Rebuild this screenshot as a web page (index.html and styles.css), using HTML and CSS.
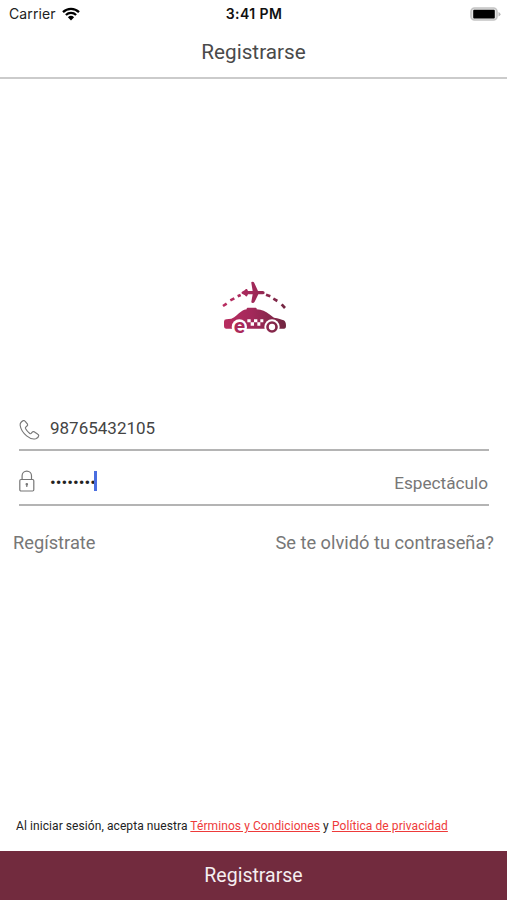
FILE: index.html
```html
<!DOCTYPE html>
<html lang="es">
<head>
    <meta charset="UTF-8">
    <meta name="viewport" content="width=device-width, initial-scale=1.0">
    <title>Registrarse</title>
    <link rel="stylesheet" href="styles.css">
</head>
<body>
    <div class="screen">
        <div class="status-bar">
            <div class="carrier">
                <span>Carrier</span>
                <svg class="wifi" viewBox="0 0 18 14">
                    <path d="M1 5.1a11.5 11.5 0 0 1 16 0M3.9 8a7.4 7.4 0 0 1 10.2 0" fill="none" stroke="#000" stroke-width="2.3"/>
                    <path d="M5.9 10.2a4.5 4.5 0 0 1 6.2 0L9 13.6z"/>
                </svg>
            </div>
            <div class="time">3:41 PM</div>
            <div class="battery">
                <svg viewBox="0 0 31 14">
                    <rect x="1" y="1" width="26" height="12" rx="3.5" fill="#e4e4e4" stroke="#c4c4c4" stroke-width="1.6"/>
                    <rect x="3.2" y="2.7" width="21.6" height="8.8" rx="1"/>
                    <path d="M28.5 5v4.5q2-.8 2-2.25t-2-2.25z" fill="#b8b8b8"/>
                </svg>
            </div>
        </div>
        <h1 class="title">Registrarse</h1>

        <div class="logo">
            <svg viewBox="0 0 270 225">
                <defs>
                    <linearGradient id="wine" gradientUnits="userSpaceOnUse" x1="40" y1="0" x2="230" y2="0">
                        <stop offset="0" stop-color="#b92d60"/>
                        <stop offset="0.45" stop-color="#a3295a"/>
                        <stop offset="1" stop-color="#702640"/>
                    </linearGradient>
                </defs>
                <!-- flight path -->
                <path d="M39 108l11-7M61 91l12-6M83 79l9-4M168 74l13 5M190 86l12 7M215 103l10 11" fill="none" stroke="url(#wine)" stroke-width="8"/>
                <!-- plane -->
                <path d="M164 68q0-5-6-5h-14l-11-24q-1-4-6-4-4 0-3 4l4 24h-14l-3-6q-5-1-6 3l-9 5q-3 3 0 6l9 5q1 4 6 3l3-6h14l-4 22q0 4 4 4t6-4l11-22h13q6 0 6-5z" fill="url(#wine)"/>
                <!-- car -->
                <path d="M42 155q0-7 7-7l15-2q9-3 16-10 14-14 23-17l7-1v-2q0-3 3-3h24q3 0 3 3v2q23 2 37 14l15 11q20 3 29 8 7 4 7 16 0 9-6 9H48q-6 0-6-7z" fill="url(#wine)"/>
                <circle cx="88" cy="171" r="23" fill="#fff"/>
                <circle cx="186" cy="171" r="23" fill="#fff"/>
                <circle cx="186" cy="171" r="13.5" fill="none" stroke="url(#wine)" stroke-width="8"/>
                <text x="88" y="188" class="logo-letter">e</text>
                <path d="M112 148h10v9h-10zM132 148h10v9h-10zM151 148h9v9h-9zM122 157h10v10h-10zM142 157h9v10h-9z" fill="#fff"/>
            </svg>
        </div>

        <div class="form">
            <div class="field">
                <svg class="phone-icon" viewBox="0 0 22 22">
                    <path d="M4.5 1.2Q1 2.8 1.2 6 2 12 8 17.2q5 4.2 9.600 3 2.8-1 3.1-3.3 0-1-1-1.5l-3.8-2.500q-1.2-.7-2 .3l-1.1 1.4q-.7.6-1.5 0-3-2.300-4.500-5.200-.4-1 .4-1.600L8.600 6.600q.9-.7.3-1.700L6.300 1.700q-.7-1-1.800-.5z"/>
                </svg>
                <span class="phone">98765432105</span>
            </div>
            <div class="field password-field">
                <svg class="lock-icon" viewBox="0 0 16 22">
                    <rect x=".8" y="9.5" width="14" height="11.5" rx="1.2"/>
                    <path d="M3.1 9.5V5.800a4.700 4.700 0 0 1 9.400 0v3.700"/>
                    <circle cx="7.8" cy="14.2" r=".7"/>
                    <path d="M7.8 14.500v2.500"/>
                </svg>
                <span class="dots">••••••••</span>
                <span class="caret"></span>
                <span class="show">Espectáculo</span>
            </div>
            <div class="links">
                <span>Regístrate</span>
                <span>Se te olvidó tu contraseña?</span>
            </div>
        </div>

        <p class="terms">Al iniciar sesión, acepta nuestra <a>Términos y Condiciones</a> y <a>Política de privacidad</a></p>
        <button class="submit">Registrarse</button>
    </div>
</body>
</html>
```
FILE: styles.css
```css
body {
    margin: 0;
    font-family: Roboto, sans-serif;
    background: #fff;
}
.screen {
    display: flex;
    flex-direction: column;
    height: 900px;
}
.status-bar {
    display: grid;
    grid-template-columns: 1fr auto 1fr;
    align-items: center;
    height: 27px;
    padding: 0 6px 0 9px;
    font-family: Inter, sans-serif;
    font-size: 14px;
    color: #222;
}
.carrier {
    display: flex;
    align-items: center;
    gap: 6px;
    letter-spacing: 0.1px;
}
.wifi {
    width: 18px;
    height: 14px;
}
.time {
    margin-right: 2px;
    font-size: 14px;
    font-weight: 600;
    letter-spacing: 0.4px;
    color: #111;
}
.battery {
    display: flex;
    justify-content: flex-end;
}
.battery svg {
    width: 31px;
    height: 14px;
}
.title {
    height: 50px;
    margin: 0;
    border-bottom: 2px solid #cbcbcb;
    font-size: 20.7px;
    font-weight: 400;
    line-height: 50px;
    text-align: center;
    color: #4a4a4a;
}
.logo {
    height: 75px;
    margin-top: 191px;
    padding-left: 3px;
    text-align: center;
}
.logo svg {
    width: 90px;
    height: 75px;
}
.logo-letter {
    font-family: Roboto, sans-serif;
    font-size: 63px;
    font-weight: 700;
    text-anchor: middle;
    fill: #ab295a;
}
.form {
    margin-top: 60px;
}
.field {
    display: flex;
    align-items: center;
    box-sizing: border-box;
    height: 46px;
    margin: 0 18px 0 19px;
    border-bottom: 2px solid #b4b4b4;
}
.field svg {
    fill: none;
    stroke: #777;
    stroke-width: 1.2;
}
.phone-icon {
    width: 21px;
    height: 22px;
    margin-top: 6px;
}
.phone {
    margin-top: 2px;
    margin-left: 10px;
    font-size: 17px;
    color: #444;
}
.password-field {
    height: 55px;
    padding-top: 6px;
}
.lock-icon {
    width: 16px;
    height: 22px;
}
.dots {
    margin-top: 2px;
    margin-left: 15px;
    font-size: 17px;
    color: #222;
}
.caret {
    width: 3px;
    height: 20px;
    margin-left: -2px;
    background: #4a6ee0;
}
.show {
    margin-top: 4px;
    margin-right: 1px;
    margin-left: auto;
    font-size: 17.2px;
    color: #777;
}
.links {
    display: flex;
    justify-content: space-between;
    padding: 26px 13px 0;
    font-size: 18.25px;
    color: #777;
}
.terms {
    margin: auto 0 17px 16px;
    font-size: 12px;
    line-height: 16px;
    letter-spacing: 0.08px;
    color: #222;
}
.terms a {
    color: #ee3a3a;
    text-decoration: underline;
}
.submit {
    height: 49px;
    border: none;
    background: #722b3e;
    font-family: Roboto, sans-serif;
    font-size: 19.5px;
    color: #f5eef0;
}
```
